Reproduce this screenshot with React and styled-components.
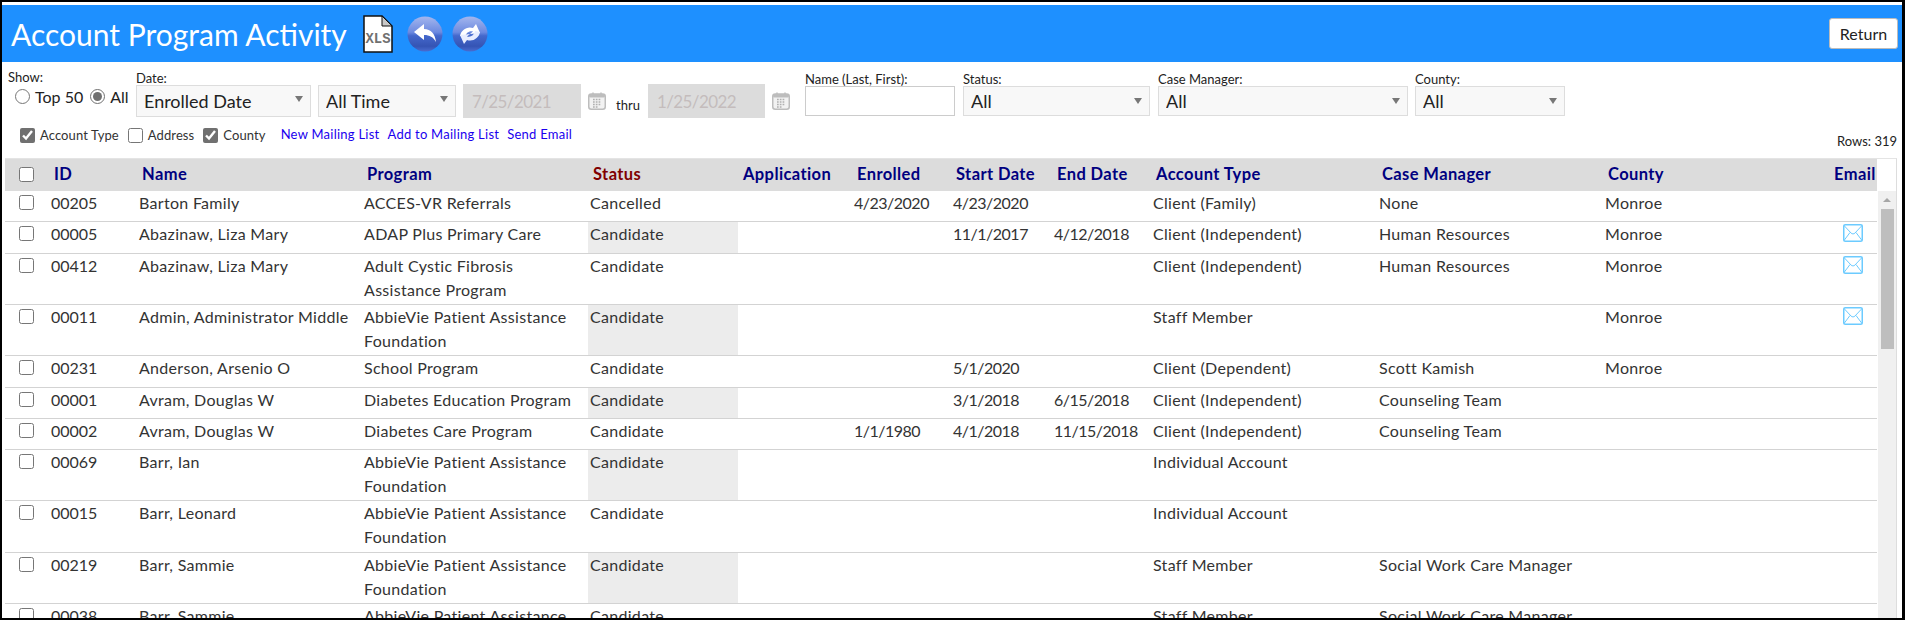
import React from "react";
import styled, { createGlobalStyle } from "styled-components";

const FONT = `Lato, "Open Sans", "Liberation Sans", sans-serif`;

const GlobalStyle = createGlobalStyle`
  html, body {
    margin: 0;
    padding: 0;
    background: #fff;
    font-family: ${FONT};
    color: #333;
  }
  * {
    box-sizing: border-box;
  }
`;

const S = {};

S.Frame = styled.div`
  display: flex;
  flex-direction: column;
  width: 1905px;
  height: 620px;
  padding-top: 3px;
  overflow: hidden;
  background: #fff;
  border-style: solid;
  border-color: #000;
  border-width: 2px 3px 2px 2px;
`;

S.TitleBar = styled.div`
  display: flex;
  align-items: center;
  flex: none;
  height: 57px;
  padding: 0 4px 0 9px;
  background: #1e90ff;
`;

S.Title = styled.h1`
  width: 352px;
  margin: 0;
  font-size: 30px;
  font-weight: 400;
  white-space: nowrap;
  color: #fff;
`;

S.IconSlot = styled.span`
  display: flex;
  margin-right: ${(props) => props.$gap || 0}px;
`;

S.ReturnButton = styled.button`
  width: 69px;
  height: 31px;
  margin-left: auto;
  padding: 0;
  font-family: ${FONT};
  font-size: 16px;
  color: #222;
  background: #fff;
  border: 1px solid #bbb;
  border-radius: 3px;
`;

S.Toolbar = styled.div`
  flex: none;
  height: 96px;
  padding-top: 8px;
`;

S.FilterRow = styled.div`
  display: flex;
  align-items: flex-start;
  height: 47px;
  padding-left: 6px;
`;

S.Field = styled.div`
  display: flex;
  flex-direction: column;
  flex: none;
  width: ${(props) => props.$width}px;
  margin-left: ${(props) => props.$left || 0}px;
  padding-top: ${(props) => props.$top || 0}px;
`;

S.Label = styled.label`
  height: 14px;
  font-size: 13px;
  line-height: 14px;
  color: #222;
`;

S.Controls = styled.div`
  display: flex;
  align-items: flex-start;
`;

S.RadioGroup = styled.div`
  display: flex;
  align-items: center;
  height: 22px;
  padding: 2px 0 0 7px;
  font-size: 16px;
  color: #222;
`;

S.Radio = styled.input.attrs({ type: "radio", name: "show" })`
  width: 15px;
  height: 15px;
  margin: 0 5px 0 0;
  accent-color: #707070;
`;

S.RadioText = styled.span`
  margin-right: 7px;
`;

S.SelectWrap = styled.div`
  position: relative;
  flex: none;
  width: ${(props) => props.$width}px;
  height: ${(props) => props.$height || 30}px;
  margin-right: ${(props) => props.$gap || 0}px;

  &::after {
    content: "";
    position: absolute;
    top: ${(props) => (props.$height ? 11 : 12)}px;
    right: 8px;
    border-style: solid;
    border-width: 6px 4.5px 0 4.5px;
    border-color: #777 transparent transparent transparent;
    pointer-events: none;
  }
`;

S.Select = styled.select`
  width: 100%;
  height: 100%;
  padding: 0 0 0 7px;
  font-family: ${FONT};
  font-size: 18px;
  color: #222;
  background: #f8f8f8;
  border: 1px solid #ddd;
  border-radius: 0;
  appearance: none;
  outline: none;
`;

S.DateInput = styled.input`
  flex: none;
  width: ${(props) => props.$width}px;
  height: 34px;
  margin-top: -1px;
  padding: 0 0 0 8px;
  font-family: ${FONT};
  font-size: 17px;
  letter-spacing: -0.6px;
  color: #c4bcbc;
  background: #dcdcdc;
  border: 1px solid #dcdcdc;
  outline: none;
`;

S.CalendarSlot = styled.span`
  display: flex;
  flex: none;
  margin: 7px 0 0 7px;
`;

S.Thru = styled.span`
  flex: none;
  width: 42px;
  padding: 12px 0 0 10px;
  font-size: 13px;
  line-height: 16px;
  color: #222;
`;

S.TextInput = styled.input`
  width: 100%;
  height: 30px;
  background: #fff;
  border: 1px solid #ccc;
  outline: none;
`;

S.OptionRow = styled.div`
  display: flex;
  align-items: flex-start;
  height: 41px;
  padding: 8px 5px 0 18px;
  font-size: 13px;
  letter-spacing: 0.1px;
  color: #333;
`;

S.Option = styled.label`
  display: flex;
  align-items: center;
  height: 20px;
  margin-right: 9px;
`;

S.Check = styled.input.attrs({ type: "checkbox" })`
  width: 15px;
  height: 15px;
  margin: 0 5px 0 0;
  accent-color: #707070;
`;

S.LinkGroup = styled.div`
  display: flex;
  gap: 8px;
  height: 20px;
  margin-left: 6px;
  line-height: 18px;
  letter-spacing: 0.25px;
`;

S.MailLink = styled.a`
  color: #1a00ee;
  text-decoration: none;
`;

S.RowCount = styled.div`
  margin: 8px 0 0 auto;
  line-height: 16px;
  letter-spacing: 0;
  color: #222;
`;

S.TableArea = styled.div`
  display: flex;
  flex: 1;
  min-height: 0;
  width: 1892px;
  margin-left: 3px;
  overflow: hidden;
  border-top: 1px solid #e4e4e4;
  border-right: 1px solid #ddd;
`;

S.Table = styled.table`
  flex: none;
  width: 1872px;
  table-layout: fixed;
  align-self: flex-start;
  border-collapse: separate;
  border-spacing: 0;
  font-size: 16px;
  letter-spacing: 0.3px;
`;

S.HeadCell = styled.th`
  height: 32px;
  padding: 0 4px 2px 5px;
  font-size: 16.5px;
  font-weight: 700;
  letter-spacing: 0.4px;
  text-align: ${(props) => props.$align || "left"};
  white-space: nowrap;
  color: ${(props) => props.$color || "#000080"};
  background: #dcdcdc;
`;

S.Row = styled.tr`
  height: ${(props) => props.$height}px;

  &:nth-child(even) td:nth-child(5) {
    background: #ececec;
  }
`;

S.Cell = styled.td`
  padding: 0 2px;
  vertical-align: top;
  line-height: 24px;
  border-bottom: 1px solid #d3d3d3;
`;

S.IdCell = styled(S.Cell)`
  letter-spacing: 0;
`;

S.DateCell = styled(S.Cell)`
  letter-spacing: -0.5px;
`;

S.CheckCell = styled(S.Cell)`
  padding: 3px 0 0 14px;
  line-height: 15px;
`;

S.RowCheck = styled.input.attrs({ type: "checkbox" })`
  display: block;
  width: 15px;
  height: 15px;
  margin: 1px 0 0;
`;

S.HeadCheck = styled(S.RowCheck)`
  margin: 0 0 0 9px;
`;

S.MailCell = styled(S.Cell)`
  padding: 2px 14px 0 0;
  text-align: right;
  line-height: 0;
`;

S.ScrollColumn = styled.div`
  display: flex;
  flex-direction: column;
  align-items: center;
  flex: none;
  width: 18px;
  margin-left: 1px;
`;

S.ScrollCorner = styled.div`
  flex: none;
  height: 32px;
`;

S.ScrollRail = styled.div`
  display: flex;
  flex-direction: column;
  align-items: center;
  flex: 1;
  width: 100%;
  background: #f0f0f0;
`;

S.ScrollArrow = styled.div`
  flex: none;
  width: 0;
  height: 0;
  margin: 7px 0 7px;
  border-style: solid;
  border-width: 0 4px 4px 4px;
  border-color: transparent transparent #a6a6a6 transparent;
`;

S.ScrollThumb = styled.div`
  flex: none;
  width: 13px;
  height: 140px;
  background: #bebebe;
`;

function XlsIcon() {
  return (
    <svg width="30" height="38" viewBox="0 0 30 38">
      <path d="M1 1H19L29 11V37H1Z" fill="#fff" stroke="#111" strokeWidth="1.5" />
      <path d="M19 1V11H29Z" fill="#c8c8c8" stroke="#111" strokeWidth="1" />
      <text x="15" y="28" textAnchor="middle" fontFamily="Liberation Mono, monospace" fontSize="14" fontWeight="700" textLength="25" lengthAdjust="spacingAndGlyphs" fill="#707070">XLS</text>
    </svg>
  );
}

function GlossyDefs({ id }) {
  return (
    <defs>
      <linearGradient id={id} x1="0" y1="0" x2="0" y2="1">
        <stop offset="0" stopColor="#a4b6ee" />
        <stop offset="0.45" stopColor="#6c8ae0" />
        <stop offset="0.55" stopColor="#4468cc" />
        <stop offset="0.85" stopColor="#3554b4" />
        <stop offset="1" stopColor="#4a6cd0" />
      </linearGradient>
    </defs>
  );
}

function BackIcon() {
  return (
    <svg width="36" height="36" viewBox="0 0 36 36">
      <GlossyDefs id="glossBack" />
      <circle cx="18" cy="18" r="17.5" fill="url(#glossBack)" />
      <path d="M7 16L17 8V13C24 13 28 18 29 26C26 21 23 19 17 19V24Z" fill="#fff" />
    </svg>
  );
}

function RefreshIcon() {
  return (
    <svg width="36" height="36" viewBox="0 0 36 36">
      <GlossyDefs id="glossRefresh" />
      <circle cx="18" cy="18" r="17.5" fill="url(#glossRefresh)" />
      <path d="M8 20C9 14 15 10 21 12L24 8L28 17L18 18L21 15.5C17 14.5 14 17 13 21Z" fill="#fff" />
      <path d="M8 20C9 14 15 10 21 12L24 8L28 17L18 18L21 15.5C17 14.5 14 17 13 21Z" fill="#e8edff" transform="rotate(180 18 18)" />
    </svg>
  );
}

function CalendarIcon() {
  return (
    <svg width="18" height="18" viewBox="0 0 18 18">
      <rect x="0.75" y="2" width="16.5" height="15.25" rx="2.5" fill="#f2f2f2" stroke="#bdbdbd" strokeWidth="1.5" />
      <rect x="1" y="2" width="16" height="3.5" rx="1.5" fill="#bdbdbd" />
      <path d="M5 0.5V3.5M13 0.5V3.5" stroke="#bdbdbd" strokeWidth="1.5" />
      <path d="M5 7.5H13M5 10H13M5 12.5H13M5 15H10" stroke="#b0b0b0" strokeWidth="1.6" strokeDasharray="1.7 1.1" />
    </svg>
  );
}

function MailIcon() {
  return (
    <svg width="20" height="18" viewBox="0 0 20 18">
      <rect x="0.75" y="0.75" width="18.5" height="16.5" rx="1.5" fill="#fff" stroke="#6ccbff" strokeWidth="1.5" />
      <path d="M1 1.5L8 9C9 10.2 11 10.2 12 9L19 1.5M1 16.5L7 8.5M19 16.5L13 8.5" fill="none" stroke="#6ccbff" strokeWidth="1" />
    </svg>
  );
}

const COLUMNS = [
  { key: "check", width: 44, label: "" },
  { key: "id", width: 88, label: "ID" },
  { key: "name", width: 225, label: "Name" },
  { key: "program", width: 226, label: "Program" },
  { key: "status", width: 150, label: "Status", color: "#800000" },
  { key: "application", width: 114, label: "Application" },
  { key: "enrolled", width: 99, label: "Enrolled" },
  { key: "start", width: 101, label: "Start Date" },
  { key: "end", width: 99, label: "End Date" },
  { key: "type", width: 226, label: "Account Type" },
  { key: "manager", width: 226, label: "Case Manager" },
  { key: "county", width: 226, label: "County" },
  { key: "email", width: 48, label: "Email", align: "right" },
];

const ABBIE = "AbbieVie Patient Assistance Foundation";

const ROWS = [
  { id: "00205", name: "Barton Family", program: "ACCES-VR Referrals", status: "Cancelled", enrolled: "4/23/2020", start: "4/23/2020", type: "Client (Family)", manager: "None", county: "Monroe", height: 30.5 },
  { id: "00005", name: "Abazinaw, Liza Mary", program: "ADAP Plus Primary Care", status: "Candidate", start: "11/1/2017", end: "4/12/2018", type: "Client (Independent)", manager: "Human Resources", county: "Monroe", mail: true, height: 32 },
  { id: "00412", name: "Abazinaw, Liza Mary", program: "Adult Cystic Fibrosis Assistance Program", status: "Candidate", type: "Client (Independent)", manager: "Human Resources", county: "Monroe", mail: true, height: 51 },
  { id: "00011", name: "Admin, Administrator Middle", program: ABBIE, status: "Candidate", type: "Staff Member", county: "Monroe", mail: true, height: 51 },
  { id: "00231", name: "Anderson, Arsenio O", program: "School Program", status: "Candidate", start: "5/1/2020", type: "Client (Dependent)", manager: "Scott Kamish", county: "Monroe", height: 32 },
  { id: "00001", name: "Avram, Douglas W", program: "Diabetes Education Program", status: "Candidate", start: "3/1/2018", end: "6/15/2018", type: "Client (Independent)", manager: "Counseling Team", height: 31 },
  { id: "00002", name: "Avram, Douglas W", program: "Diabetes Care Program", status: "Candidate", enrolled: "1/1/1980", start: "4/1/2018", end: "11/15/2018", type: "Client (Independent)", manager: "Counseling Team", height: 31 },
  { id: "00069", name: "Barr, Ian", program: ABBIE, status: "Candidate", type: "Individual Account", height: 51 },
  { id: "00015", name: "Barr, Leonard", program: ABBIE, status: "Candidate", type: "Individual Account", height: 52 },
  { id: "00219", name: "Barr, Sammie", program: ABBIE, status: "Candidate", type: "Staff Member", manager: "Social Work Care Manager", height: 51 },
  { id: "00038", name: "Barr, Sammie", program: ABBIE, status: "Candidate", type: "Staff Member", manager: "Social Work Care Manager", height: 51 },
];

function SelectBox({ width, height, gap, value }) {
  return (
    <S.SelectWrap $width={width} $height={height} $gap={gap}>
      <S.Select defaultValue={value}>
        <option>{value}</option>
      </S.Select>
    </S.SelectWrap>
  );
}

function App() {
  return (
    <S.Frame>
      <GlobalStyle />
      <S.TitleBar>
        <S.Title>Account Program Activity</S.Title>
        <S.IconSlot $gap={14}><XlsIcon /></S.IconSlot>
        <S.IconSlot $gap={9}><BackIcon /></S.IconSlot>
        <S.IconSlot><RefreshIcon /></S.IconSlot>
        <S.ReturnButton>Return</S.ReturnButton>
      </S.TitleBar>

      <S.Toolbar>
        <S.FilterRow>
          <S.Field $width={128}>
            <S.Label>Show:</S.Label>
            <S.RadioGroup>
              <S.Radio />
              <S.RadioText>Top 50</S.RadioText>
              <S.Radio defaultChecked />
              <S.RadioText>All</S.RadioText>
            </S.RadioGroup>
          </S.Field>
          <S.Field $width={654} $top={1}>
            <S.Label>Date:</S.Label>
            <S.Controls>
              <SelectBox width={175} height={32} gap={7} value="Enrolled Date" />
              <SelectBox width={138} height={32} gap={7} value="All Time" />
              <S.DateInput $width={118} disabled defaultValue="7/25/2021" />
              <S.CalendarSlot><CalendarIcon /></S.CalendarSlot>
              <S.Thru>thru</S.Thru>
              <S.DateInput $width={117} disabled defaultValue="1/25/2022" />
              <S.CalendarSlot><CalendarIcon /></S.CalendarSlot>
            </S.Controls>
          </S.Field>
          <S.Field $width={150} $left={15} $top={2}>
            <S.Label>Name (Last, First):</S.Label>
            <S.TextInput />
          </S.Field>
          <S.Field $width={187} $left={8} $top={2}>
            <S.Label>Status:</S.Label>
            <SelectBox width={187} value="All" />
          </S.Field>
          <S.Field $width={250} $left={8} $top={2}>
            <S.Label>Case Manager:</S.Label>
            <SelectBox width={250} value="All" />
          </S.Field>
          <S.Field $width={150} $left={7} $top={2}>
            <S.Label>County:</S.Label>
            <SelectBox width={150} value="All" />
          </S.Field>
        </S.FilterRow>
        <S.OptionRow>
          <S.Option><S.Check defaultChecked />Account Type</S.Option>
          <S.Option><S.Check />Address</S.Option>
          <S.Option><S.Check defaultChecked />County</S.Option>
          <S.LinkGroup>
            <S.MailLink href="#">New Mailing List</S.MailLink>
            <S.MailLink href="#">Add to Mailing List</S.MailLink>
            <S.MailLink href="#">Send Email</S.MailLink>
          </S.LinkGroup>
          <S.RowCount>Rows: 319</S.RowCount>
        </S.OptionRow>
      </S.Toolbar>

      <S.TableArea>
        <S.Table>
          <colgroup>
            {COLUMNS.map((col) => <col key={col.key} width={col.width} />)}
          </colgroup>
          <thead>
            <tr>
              {COLUMNS.map((col) => (
                <S.HeadCell key={col.key} $color={col.color} $align={col.align}>
                  {col.key === "check" ? <S.HeadCheck /> : col.label}
                </S.HeadCell>
              ))}
            </tr>
          </thead>
          <tbody>
            {ROWS.map((row) => (
              <S.Row key={row.id} $height={row.height}>
                <S.CheckCell><S.RowCheck /></S.CheckCell>
                <S.IdCell>{row.id}</S.IdCell>
                <S.Cell>{row.name}</S.Cell>
                <S.Cell>{row.program}</S.Cell>
                <S.Cell>{row.status}</S.Cell>
                <S.Cell />
                <S.DateCell>{row.enrolled}</S.DateCell>
                <S.DateCell>{row.start}</S.DateCell>
                <S.DateCell>{row.end}</S.DateCell>
                <S.Cell>{row.type}</S.Cell>
                <S.Cell>{row.manager}</S.Cell>
                <S.Cell>{row.county}</S.Cell>
                <S.MailCell>{row.mail && <MailIcon />}</S.MailCell>
              </S.Row>
            ))}
          </tbody>
        </S.Table>
        <S.ScrollColumn>
          <S.ScrollCorner />
          <S.ScrollRail>
            <S.ScrollArrow />
            <S.ScrollThumb />
          </S.ScrollRail>
        </S.ScrollColumn>
      </S.TableArea>
    </S.Frame>
  );
}

export default App;
